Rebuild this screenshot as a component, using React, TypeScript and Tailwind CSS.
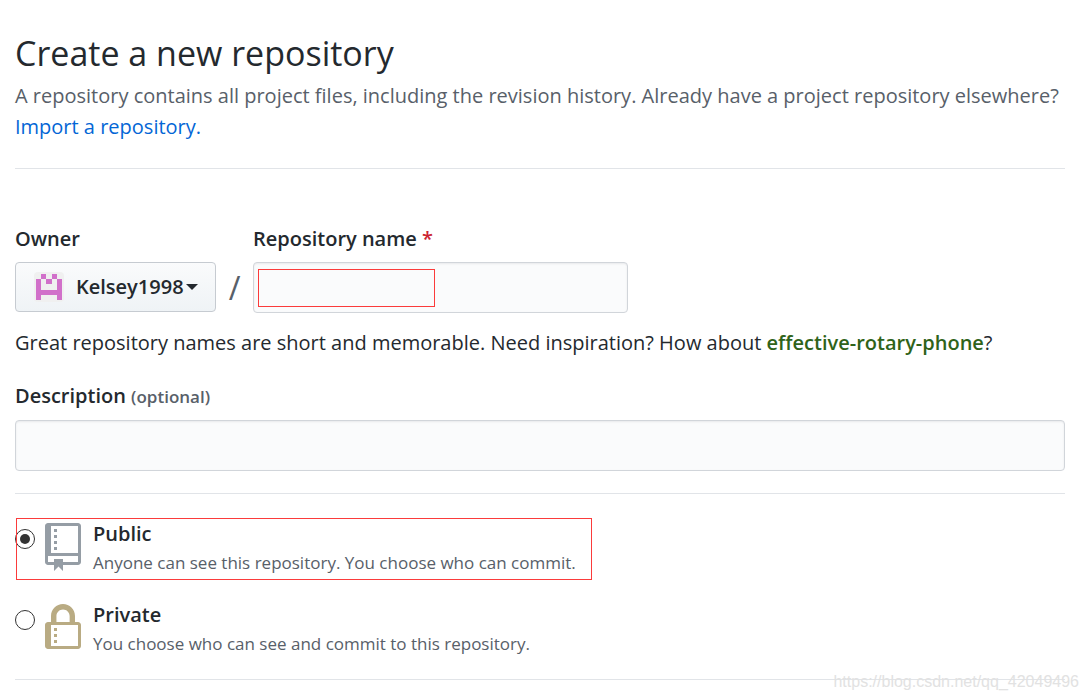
import type { ReactNode } from "react";

// filled cells of the 5x5 identicon
const identicon = [
  [1, 0], [3, 0],
  [0, 1], [2, 1], [4, 1],
  [0, 2], [4, 2],
  [0, 3], [1, 3], [2, 3], [3, 3], [4, 3],
  [0, 4], [4, 4],
];

const inputClass =
  "block w-full h-[51px] px-3 rounded border border-[#d1d5da] bg-[#fafbfc] shadow-[inset_0_1px_2px_rgba(27,31,35,0.08)] text-xl";

export default function App() {
  return (
    <main className="relative min-h-screen bg-white pt-[26px] pl-[15px] pr-[23px] font-['Open_Sans','Noto_Sans',sans-serif] text-xl text-[#24292e]">
      <header className="border-b border-[#e1e4e8] pb-[26px]">
        <h1 className="text-[34px] leading-[54px]">Create a new repository</h1>
        <p className="leading-[31px] text-[#586069]">
          A repository contains all project files, including the revision history. Already have a
          project repository elsewhere?{" "}
          <a href="#import" className="text-[#0366d6]">
            Import a repository.
          </a>
        </p>
      </header>

      <form className="mt-[54px]">
        <div className="flex">
          <div>
            <label htmlFor="owner" className="block mb-[7px] leading-8 font-semibold">
              Owner
            </label>
            <button
              id="owner"
              type="button"
              className="flex h-[50px] w-[201px] items-center rounded border border-[#c6cbd1] bg-linear-to-b from-[#fafbfc] to-[#eff3f6] pl-[18px] font-semibold"
            >
              <Identicon />
              <span className="ml-3">Kelsey1998</span>
              <span className="ml-[2px] border-x-6 border-t-6 border-x-transparent border-t-[#24292e]" />
            </button>
          </div>
          <span className="w-[37px] self-end text-center text-[32px] leading-[51px] text-[#586069]">/</span>
          <div className="w-[375px]">
            <label htmlFor="name" className="block mb-[7px] leading-8 font-semibold">
              Repository name <span className="text-[#cb2431]">*</span>
            </label>
            <div className="relative">
              <input id="name" type="text" className={inputClass} />
              <div className="pointer-events-none absolute top-[7px] left-[5px] h-[38px] w-[177px] border border-[#fb3b3b]" />
            </div>
          </div>
        </div>

        <p className="mt-[14px] leading-8">
          Great repository names are short and memorable. Need inspiration? How about{" "}
          <strong className="font-semibold text-[#2f6319]">effective-rotary-phone</strong>?
        </p>

        <label htmlFor="description" className="mt-[21px] mb-[7px] block leading-8 font-semibold">
          Description <span className="text-[17px] text-[#586069]">(optional)</span>
        </label>
        <input id="description" type="text" className={inputClass} />

        <div className="mt-[22px] flex flex-col gap-6 border-y border-[#e1e4e8] pt-6 pb-[23px]">
          <div className="relative">
            <Visibility
              id="public"
              title="Public"
              description="Anyone can see this repository. You choose who can commit."
              icon={<RepoIcon />}
              checked
            />
            <div className="pointer-events-none absolute top-0 left-px h-[62px] w-[576px] border border-[#fb3b3b]" />
          </div>
          <Visibility
            id="private"
            title="Private"
            description="You choose who can see and commit to this repository."
            icon={<LockIcon />}
          />
        </div>
      </form>

      <span className="absolute right-[9px] bottom-[6px] font-['Liberation_Sans',sans-serif] text-base leading-6 text-[#e2e2e2]">
        https://blog.csdn.net/qq_42049496
      </span>
    </main>
  );
}

type VisibilityProps = {
  id: string;
  title: string;
  description: string;
  icon: ReactNode;
  checked?: boolean;
};

function Visibility({ id, title, description, icon, checked }: VisibilityProps) {
  return (
    <div className="flex items-start">
      <input
        id={id}
        type="radio"
        name="visibility"
        defaultChecked={checked}
        className="mt-[11px] grid size-5 shrink-0 appearance-none place-items-center rounded-full border border-[#333] bg-white before:size-[10px] before:rounded-full checked:before:bg-[#333]"
      />
      <label htmlFor={id} className="ml-[10px] flex h-[57px] gap-3">
        <span className="mt-[5px]">{icon}</span>
        <span>
          <span className="block leading-8 font-semibold">{title}</span>
          <span className="block text-[17px] leading-[25px] text-[#586069]">{description}</span>
        </span>
      </label>
    </div>
  );
}

function Identicon() {
  return (
    <svg width="30" height="30" viewBox="0 0 30 30" className="rounded-sm bg-[#f0f0f0]">
      {identicon.map(([x, y]) => (
        <rect
          key={`${x}-${y}`}
          x={2 + x * 5.2}
          y={2 + y * 5.2}
          width="5.2"
          height="5.2"
          fill="#d170ca"
          shapeRendering="crispEdges"
        />
      ))}
    </svg>
  );
}

function RepoIcon() {
  return (
    <svg width="36" height="48" viewBox="0 0 12 16" fill="#959da5">
      <path
        fillRule="evenodd"
        d="M4 9H3V8h1v1zm0-3H3v1h1V6zm0-2H3v1h1V4zm0-2H3v1h1V2zm8-1v12c0 .55-.45 1-1 1H6v2l-1.5-1.5L3 16v-2H1c-.55 0-1-.45-1-1V1c0-.55.45-1 1-1h10c.55 0 1 .45 1 1zm-1 10H1v2h2v-1h3v1h5v-2zm0-10H2v9h9V1z"
      />
    </svg>
  );
}

function LockIcon() {
  return (
    <svg width="36" height="48" viewBox="0 0 12 16" fill="#b9ab83">
      <path
        fillRule="evenodd"
        d="M4 13H3v-1h1v1zm8-6v7c0 .55-.45 1-1 1H1c-.55 0-1-.45-1-1V7c0-.55.45-1 1-1h1V4c0-2.2 1.8-4 4-4s4 1.8 4 4v2h1c.55 0 1 .45 1 1zM3.8 6h4.41V4c0-1.22-.98-2.2-2.2-2.2-1.22 0-2.2.98-2.2 2.2v2H3.8zM11 7H2v7h9V7zM4 8H3v1h1V8zm0 2H3v1h1v-1z"
      />
    </svg>
  );
}
